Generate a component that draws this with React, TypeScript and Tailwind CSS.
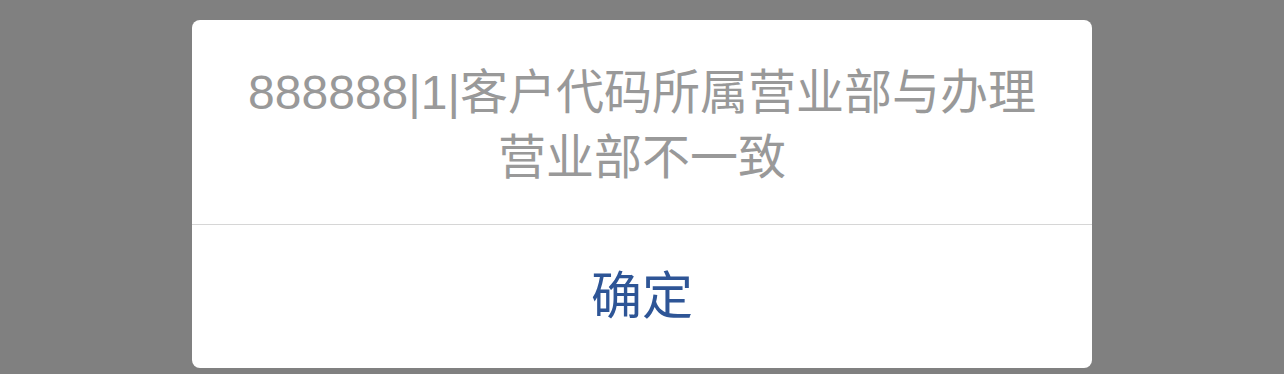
import React from "react";

export default function App() {
  return (
    <div
      className="w-full h-[374px] bg-[#808080] flex justify-center pt-[20px]"
      style={{ fontFamily: '"Liberation Sans", "Noto Sans CJK SC", sans-serif' }}
    >
      <div className="w-[900px] h-[348px] bg-white rounded-[8px] flex flex-col overflow-hidden">
        <div className="h-[204px] flex items-center justify-center px-[40px] pt-[6px]">
          <p className="text-[48px] leading-[65px] text-[#999999] text-center">
            888888|1|客户代码所属营业部与办理
            <br />
            营业部不一致
          </p>
        </div>
        <div className="h-[1px] bg-[#d6d6d6]" />
        <div className="flex-1 flex items-center justify-center">
          <span className="text-[51px] text-[#2e5596] leading-none">确定</span>
        </div>
      </div>
    </div>
  );
}
